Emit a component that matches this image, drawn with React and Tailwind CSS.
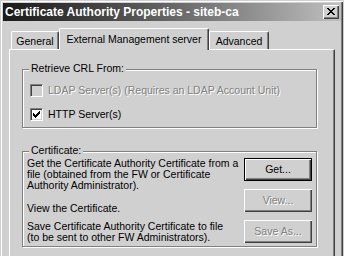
import React from "react";

function CloseButton() {
  return (
    <div className="w-[16px] h-[14px] bg-[#d0d0d0] shadow-[inset_1px_1px_0_#ffffff,inset_-1px_-1px_0_#404040,inset_-2px_-2px_0_#808080] pl-[4px] pt-[3px]">
      <svg width="8" height="7" viewBox="0 0 8 7" shapeRendering="crispEdges">
        <path d="M0 0h2v1H0zM6 0h2v1H6zM1 1h2v1H1zM5 1h2v1H5zM2 2h4v1H2zM3 3h2v1H3zM2 4h4v1H2zM1 5h2v1H1zM5 5h2v1H5zM0 6h2v1H0zM6 6h2v1H6z" fill="#000" />
      </svg>
    </div>
  );
}

function Tab({ children, selected, className }) {
  if (selected) {
    return (
      <div
        className={
          "relative z-10 h-[22px] mb-[-1px] flex items-center justify-center bg-[#d0d0d0] border-l border-t border-white border-r border-r-[#404040] rounded-tl-[2px] rounded-tr-[2px] shadow-[inset_-1px_0_0_#808080] whitespace-nowrap " +
          className
        }
      >
        {children}
      </div>
    );
  }
  return (
    <div
      className={
        "h-[18px] pt-[1px] flex items-center justify-center border-l border-t border-white border-r border-r-[#404040] rounded-tl-[2px] rounded-tr-[2px] shadow-[inset_-1px_0_0_#808080] whitespace-nowrap " +
        className
      }
    >
      {children}
    </div>
  );
}

function CheckBox({ checked, disabled }) {
  return (
    <div
      className={
        "w-[13px] h-[13px] flex items-center justify-center border-t border-l border-t-[#808080] border-l-[#808080] border-b border-r border-b-white border-r-white shadow-[inset_1px_1px_0_#404040,inset_-1px_-1px_0_#d0d0d0] " +
        (disabled ? "bg-[#d0d0d0]" : "bg-white")
      }
    >
      {checked && (
        <svg width="7" height="7" viewBox="0 0 7 7" shapeRendering="crispEdges">
          <path d="M6 0h1v1H6zM5 1h2v1H5zM0 2h1v1H0zM4 2h3v1H4zM0 3h2v1H0zM3 3h3v1H3zM0 4h5v1H0zM1 5h3v1H1zM2 6h1v1H2z" fill="#000" />
        </svg>
      )}
    </div>
  );
}

function Button({ children, isDefault, disabled, className }) {
  const base =
    "w-[68px] h-[23px] flex items-center justify-center bg-[#d0d0d0] ";
  const bevel = isDefault
    ? "border border-black shadow-[inset_1px_1px_0_#ffffff,inset_-1px_-1px_0_#404040,inset_-2px_-2px_0_#808080] "
    : "shadow-[inset_1px_1px_0_#ffffff,inset_-1px_-1px_0_#404040,inset_-2px_-2px_0_#808080] ";
  const text = disabled ? "text-[#808080] [text-shadow:1px_1px_0_#ffffff] " : "text-black ";
  return <div className={base + bevel + text + (className || "")}>{children}</div>;
}

function Group({ legend, className, children }) {
  return (
    <div
      className={
        "relative w-[295px] border border-[#808080] shadow-[1px_1px_0_#ffffff,inset_1px_1px_0_#ffffff] " +
        className
      }
    >
      <span className="absolute left-[6px] top-[-7px] px-[2px] bg-[#d0d0d0] leading-[11px]">
        {legend}
      </span>
      {children}
    </div>
  );
}

export default function App() {
  return (
    <div className="w-[344px] h-[256px] overflow-hidden bg-[#d0d0d0] font-['Liberation_Sans',Arial,sans-serif] text-[10.5px] leading-[11px] text-black">
      <div className="w-[343px] h-[256px] pt-[3px] pl-[3px] pr-[2px] shadow-[inset_1px_1px_0_#d0d0d0,inset_2px_2px_0_#ffffff,inset_-1px_0_0_#404040,inset_-2px_0_0_#808080]">
        <div className="h-[18px] flex items-center justify-between pl-[2px] pr-[2px] bg-gradient-to-r from-[#1a1a1a] to-[#c0c0c0]">
          <span className="text-white font-bold text-[12px] leading-[14px] whitespace-nowrap">
            Certificate Authority Properties - siteb-ca
          </span>
          <CloseButton />
        </div>

        <div className="px-[6px] pt-[7px]">
          <div className="flex items-end h-[21px] pl-[2px]">
            <Tab className="w-[48px]">General</Tab>
            <Tab selected className="w-[150px]">External Management server</Tab>
            <Tab className="w-[60px]">Advanced</Tab>
          </div>

          <div className="h-[220px] border-t border-l border-white border-r border-r-[#404040] shadow-[inset_-1px_0_0_#808080] pl-[12px] pt-[19px]">
            <Group legend="Retrieve CRL From:" className="h-[59px]">
              <div className="pt-[14px] pl-[7px] flex flex-col gap-[11px]">
                <div className="flex items-center gap-[5px] h-[13px]">
                  <CheckBox disabled />
                  <span className="text-[#808080] [text-shadow:1px_1px_0_#ffffff] whitespace-nowrap">
                    LDAP Server(s) (Requires an LDAP Account Unit)
                  </span>
                </div>
                <div className="flex items-center gap-[5px] h-[13px]">
                  <CheckBox checked />
                  <span className="whitespace-nowrap">HTTP Server(s)</span>
                </div>
              </div>
            </Group>

            <Group legend="Certificate:" className="h-[96px] mt-[23px]">
              <div className="flex justify-between pt-[6px] pl-[4px] pr-[4px]">
                <div className="whitespace-nowrap">
                  <p>
                    Get the Certificate Authority Certificate from a
                    <br />
                    file (obtained from the FW or Certificate
                    <br />
                    Authority Administrator).
                  </p>
                  <p className="mt-[12px]">View the Certificate.</p>
                  <p className="mt-[7px]">
                    Save Certificate Authority Certificate to file
                    <br />
                    (to be sent to other FW Administrators).
                  </p>
                </div>
                <div className="flex flex-col gap-[8px]">
                  <Button isDefault>Get...</Button>
                  <Button disabled>View...</Button>
                  <Button disabled>Save As...</Button>
                </div>
              </div>
            </Group>
          </div>
        </div>
      </div>
    </div>
  );
}
